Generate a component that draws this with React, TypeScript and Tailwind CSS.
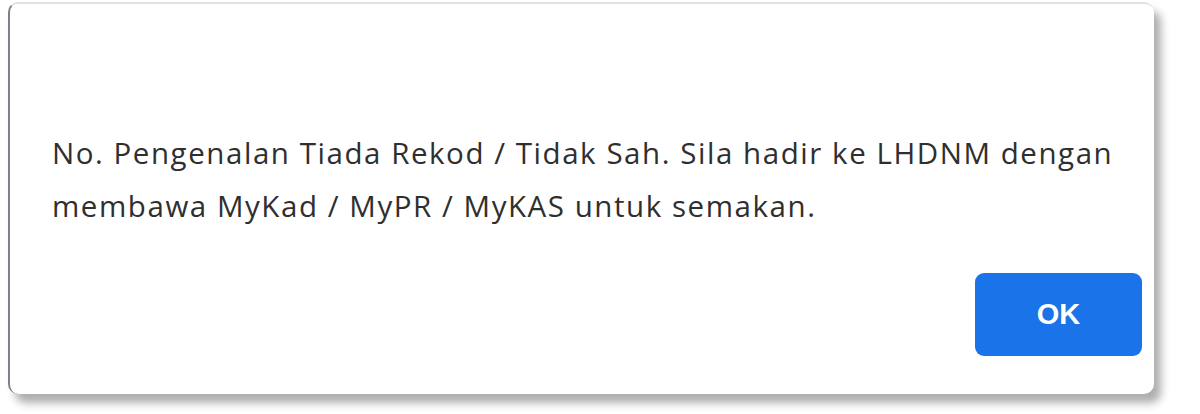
export default function App() {
  return (
    <div className="h-[414px] w-[1200px] overflow-hidden bg-white pl-[8px] pt-[2px]">
      <div className="flex h-[392px] w-[1146px] flex-col rounded-[10px] border-t-2 border-l-2 border-t-[#e2e2e2] border-l-[#7d8088] bg-white shadow-[7px_9px_9px_rgba(0,0,0,0.32)]">
        <p
          className="mt-[122px] pl-[42px] pr-[10px] text-[29.5px] leading-[53px] tracking-[1.55px] text-[#2f2f2f]"
          style={{ fontFamily: '"Open Sans", "Noto Sans", sans-serif' }}
        >
          No. Pengenalan Tiada Rekod / Tidak Sah. Sila hadir ke LHDNM dengan membawa MyKad / MyPR / MyKAS untuk semakan.
        </p>
        <div className="mt-auto flex justify-end pb-[38px] pr-[12px]">
          <button
            className="flex h-[83px] w-[167px] items-center justify-center rounded-[9px] bg-[#1a73e8] text-[29px] font-bold text-white"
            style={{ fontFamily: '"Liberation Sans", Arial, sans-serif' }}
          >
            OK
          </button>
        </div>
      </div>
    </div>
  );
}
